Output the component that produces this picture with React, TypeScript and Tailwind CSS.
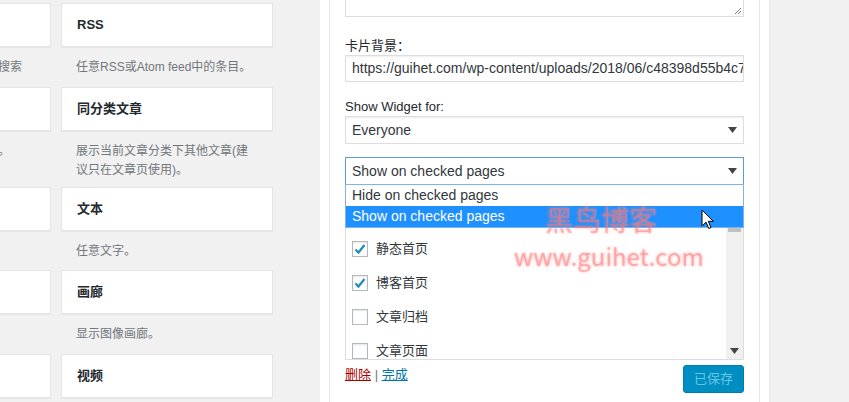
const leftCol = [
  { title: "", desc: ["一种可以用于您自己站点的搜索"], h: "h-[40px]" },
  { title: "", desc: ["分类目录的列表或下拉菜单。"], h: "h-[56px]" },
  { title: "", desc: ["自定义HTML代码。"], h: "h-[39px]" },
  { title: "", desc: ["显示图片。"], h: "h-[40px]" },
  { title: "", desc: [""], h: "h-[40px]" },
];

const rightCol = [
  { title: "RSS", desc: ["任意RSS或Atom feed中的条目。"], h: "h-[40px]" },
  { title: "同分类文章", desc: ["展示当前文章分类下其他文章(建", "议只在文章页使用)。"], h: "h-[56px]" },
  { title: "文本", desc: ["任意文字。"], h: "h-[39px]" },
  { title: "画廊", desc: ["显示图像画廊。"], h: "h-[40px]" },
  { title: "视频", desc: [""], h: "h-[40px]" },
];

const pages = [
  { label: "首页", checked: true },
  { label: "静态首页", checked: true },
  { label: "博客首页", checked: true },
  { label: "文章归档", checked: false },
  { label: "文章页面", checked: false },
];

const Arrow = () => (
  <svg width="9" height="6" viewBox="0 0 9 6">
    <polygon points="0,0 9,0 4.5,6" fill="#444" />
  </svg>
);

const WidgetCol = ({ items }: { items: typeof rightCol }) => (
  <div className="w-[212px] flex flex-col">
    {items.map((it, i) => (
      <div key={i}>
        <div className="h-[44px] bg-white border border-[#e5e5e5] shadow-[0_1px_1px_rgba(0,0,0,0.04)] flex items-center px-[15px] text-[13px] font-bold text-[#23282d]">
          {it.title}
        </div>
        <div className={`${it.h} pt-[11px] px-[15px] text-[12px] leading-[19px] text-[#72777c] whitespace-nowrap`}>
          {it.desc.map((d, j) => (
            <div key={j}>{d}</div>
          ))}
        </div>
      </div>
    ))}
  </div>
);

const Select = ({ value, focused }: { value: string; focused?: boolean }) => (
  <div
    className={`h-[28px] bg-white border flex items-center justify-between pl-[6px] pr-[6px] text-[14px] text-[#32373c] ${
      focused ? "border-[#5b9dd9]" : "border-[#ddd] shadow-[inset_0_1px_2px_rgba(0,0,0,0.07)]"
    }`}
  >
    <span>{value}</span>
    <Arrow />
  </div>
);

export default function App() {
  return (
    <div className="w-[849px] h-[402px] overflow-hidden bg-[#f1f1f1] relative flex font-[family-name:'Liberation_Sans','Noto_Sans_CJK_SC',sans-serif]">
      {/* widget list */}
      <div className="ml-[-161px] pt-[3px] flex gap-[10px] shrink-0">
        <WidgetCol items={leftCol} />
        <WidgetCol items={rightCol} />
      </div>

      {/* sidebar widget */}
      <div className="ml-[47px] w-[450px] bg-white border-r border-[#e8e8e8] px-[9px] shrink-0">
        <div className="h-full border-x border-[#e5e5e5] px-[15px] relative">
          <div className="h-[17px] border-x border-b border-[#ddd] relative">
            <svg className="absolute right-[1px] bottom-[1px]" width="8" height="8" viewBox="0 0 8 8">
              <path d="M1 7 L7 1 M4 7 L7 4" stroke="#777" strokeWidth="1" />
            </svg>
          </div>

          <div className="mt-[20px] text-[13px] leading-[18px] text-[#23282d]">卡片背景：</div>
          <div className="h-[27px] border border-[#ddd] shadow-[inset_0_1px_2px_rgba(0,0,0,0.07)] flex items-center pl-[6px] text-[14px] text-[#32373c] overflow-hidden whitespace-nowrap">
            https://guihet.com/wp-content/uploads/2018/06/c48398d55b4c7a1e
          </div>

          <div className="mt-[16px] text-[13px] leading-[18px] text-[#23282d]">Show Widget for:</div>
          <Select value="Everyone" />

          <div className="mt-[13px] relative">
            <Select value="Show on checked pages" focused />
            <div className="absolute left-0 right-0 top-[27px] bg-white border border-[#7eb4ea] z-10 text-[14px]">
              <div className="h-[21px] flex items-center pl-[6px] text-[#32373c]">Hide on checked pages</div>
              <div className="h-[21px] flex items-center pl-[6px] bg-[#1e90ff] text-white">Show on checked pages</div>
            </div>
          </div>

          <div className="mt-[9px] h-[166px] border-l border-b border-r border-[#ddd] flex overflow-hidden">
            <div className="flex-1 pt-[4px] pl-[6px] overflow-hidden">
              {pages.map((p) => (
                <div key={p.label} className="h-[34px] flex items-center gap-[8px] text-[13px] text-[#32373c]">
                  <div className="w-[16px] h-[16px] border border-[#b4b9be] bg-white shadow-[inset_0_1px_2px_rgba(0,0,0,0.1)] flex items-center justify-center">
                    {p.checked && (
                      <svg width="14" height="14" viewBox="0 0 14 14">
                        <path d="M2.5 7.5 L5.5 10.5 L11.5 3" stroke="#1e8cbe" strokeWidth="2.2" fill="none" />
                      </svg>
                    )}
                  </div>
                  <span>{p.label}</span>
                </div>
              ))}
            </div>
            <div className="w-[17px] bg-[#f0f0f0] flex flex-col justify-between items-center">
              <div className="mt-[16px] w-[13px] h-[22px] bg-[#c1c1c1]" />
              <div className="mb-[5px]">
                <Arrow />
              </div>
            </div>
          </div>

          <div className="mt-[5px] flex justify-between items-start">
            <div className="mt-[1px] text-[13px] leading-[18px]">
              <a className="text-[#a00] underline">删除</a>
              <span className="text-[#72777c]"> | </span>
              <a className="text-[#0073aa] underline">完成</a>
            </div>
            <div className="h-[28px] w-[61px] rounded-[3px] bg-[#008ec2] border border-[#007cb2] flex items-center justify-center text-[13px] text-[#66c6e4]">
              已保存
            </div>
          </div>
        </div>
      </div>

      {/* watermark */}
      <div className="absolute left-[545px] top-[201px] z-20 text-[28px] leading-[36px] text-[rgba(255,110,110,0.45)] [text-shadow:0_0_3px_rgba(255,140,140,0.7)] font-[family-name:'Noto_Sans_CJK_SC',sans-serif]">
        黑鸟博客
      </div>
      <div className="absolute left-[514px] top-[240px] z-20 text-[24px] leading-[32px] text-[rgba(255,110,110,0.45)] [text-shadow:0_0_3px_rgba(255,140,140,0.7)] font-[family-name:'Noto_Sans_CJK_SC',sans-serif]">
        www.guihet.com
      </div>

      {/* cursor */}
      <svg className="absolute left-[701px] top-[209px] z-30" width="14" height="22" viewBox="0 0 14 22">
        <path d="M1 1 L1 17 L5 13.2 L7.8 19.5 L10 18.5 L7.3 12.3 L12.3 12.3 Z" fill="white" stroke="black" strokeWidth="1" />
      </svg>
    </div>
  );
}
